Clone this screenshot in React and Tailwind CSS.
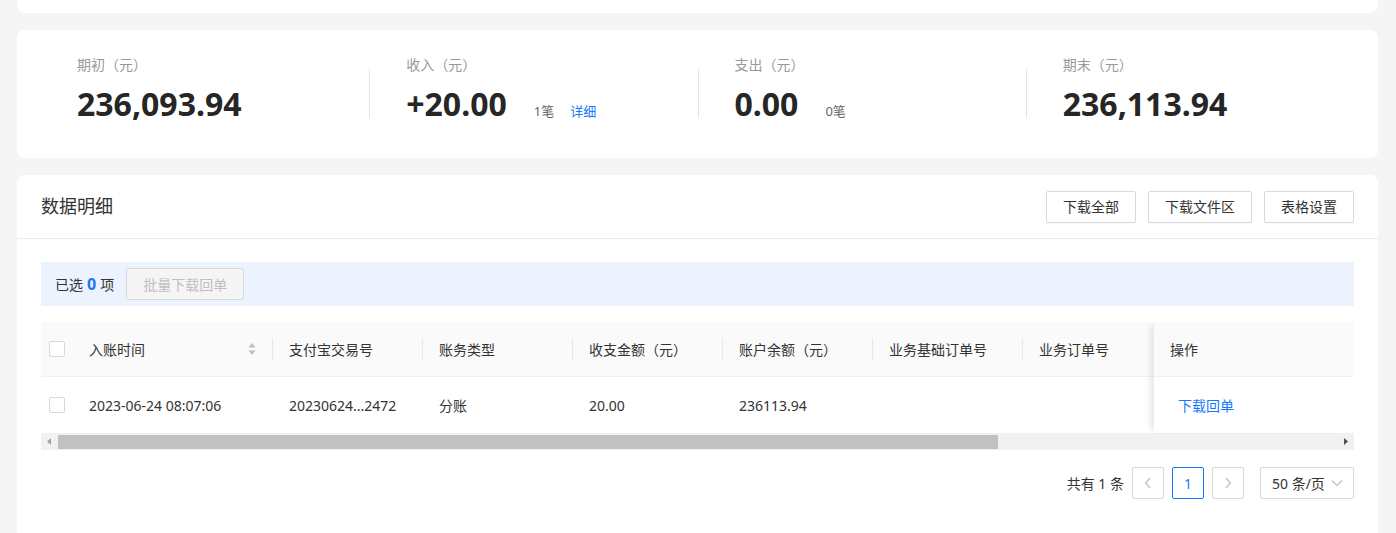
const font = { fontFamily: '"Noto Sans", "Noto Sans CJK SC", sans-serif' };

const stats = [
  { label: "期初（元）", value: "236,093.94" },
  { label: "收入（元）", value: "+20.00", count: "1笔", link: "详细" },
  { label: "支出（元）", value: "0.00", count: "0笔" },
  { label: "期末（元）", value: "236,113.94" },
];

const columns = [
  { title: "入账时间", w: "w-[200px]", sort: true },
  { title: "支付宝交易号", w: "w-[150px]" },
  { title: "账务类型", w: "w-[150px]" },
  { title: "收支金额（元）", w: "w-[150px]" },
  { title: "账户余额（元）", w: "w-[150px]" },
  { title: "业务基础订单号", w: "w-[150px]" },
  { title: "业务订单号", w: "w-[150px]" },
];

const row = ["2023-06-24 08:07:06", "20230624...2472", "分账", "20.00", "236113.94", "", ""];

const Checkbox = () => (
  <span className="block w-4 h-4 rounded-[2px] border border-[#d9d9d9] bg-white" />
);

const SortIcon = () => (
  <svg width="8" height="14" viewBox="0 0 8 14" className="shrink-0">
    <path d="M4 1 L7.5 5.5 H0.5 Z" fill="#bfbfbf" />
    <path d="M4 13 L7.5 8.5 H0.5 Z" fill="#bfbfbf" />
  </svg>
);

const StatCard = () => (
  <div className="bg-white rounded-lg h-[128px] px-6 pt-6 flex">
    {stats.map((s, i) => (
      <div key={s.label} className="flex flex-1">
        {i > 0 && <div className="w-px h-[49px] bg-[#e5e5e5] mt-[15px] shrink-0" />}
        <div className="pl-9">
          <div className="text-[14px] leading-[22px] text-[#999]">{s.label}</div>
          <div className="flex items-baseline mt-2">
            <span className="text-[32px] leading-[40px] font-bold text-[#262626]">{s.value}</span>
            {s.count && <span className="ml-[27px] text-[13px] text-[#666]">{s.count}</span>}
            {s.link && <span className="ml-4 text-[13px] text-[#1677ff]">{s.link}</span>}
          </div>
        </div>
      </div>
    ))}
  </div>
);

const Btn = ({ children }) => (
  <button className="h-8 px-4 border border-[#d9d9d9] rounded-[2px] bg-white text-[14px] text-[#333] shadow-[0_1px_1px_rgba(0,0,0,0.03)]">
    {children}
  </button>
);

const Table = () => (
  <div>
    <div className="flex relative">
      <div className="w-[1112px] overflow-hidden">
        <div className="flex h-[55px] bg-[#fafafa] border-b border-[#f0f0f0] items-center w-max">
          <div className="w-8 pl-2 shrink-0"><Checkbox /></div>
          {columns.map((c) => (
            <div key={c.title} className={`${c.w} shrink-0 flex items-center h-full relative`}>
              <div className="flex-1 flex items-center justify-between pl-4 pr-4 text-[14px] text-[#333]">
                <span>{c.title}</span>
                {c.sort && <SortIcon />}
              </div>
              <div className="w-px h-[22px] bg-[#e8e8e8] shrink-0" />
            </div>
          ))}
        </div>
        <div className="flex h-[56px] items-center w-max bg-white">
          <div className="w-8 pl-2 shrink-0"><Checkbox /></div>
          {columns.map((c, i) => (
            <div key={c.title} className={`${c.w} shrink-0 pl-4 text-[14px] text-[#333]`}>
              {row[i]}
            </div>
          ))}
        </div>
      </div>
      <div className="w-[200px] shrink-0 relative z-10 shadow-[-6px_0_6px_-4px_rgba(0,0,0,0.12)] border-l border-[#f0f0f0]">
        <div className="h-[55px] bg-[#fafafa] border-b border-[#f0f0f0] flex items-center pl-4 text-[14px] text-[#333]">
          操作
        </div>
        <div className="h-[56px] bg-white flex items-center pl-6 text-[14px] text-[#1677ff]">
          下载回单
        </div>
      </div>
    </div>
    <div className="h-[17px] bg-[#f1f1f1] flex items-center">
      <div className="w-[17px] h-full flex items-center justify-center shrink-0">
        <svg width="5" height="7" viewBox="0 0 5 7"><path d="M4 0 V7 L0 3.5 Z" fill="#a3a3a3" /></svg>
      </div>
      <div className="w-[940px] h-[14px] bg-[#c1c1c1] shrink-0" />
      <div className="flex-1" />
      <div className="w-[17px] h-full flex items-center justify-center shrink-0">
        <svg width="5" height="7" viewBox="0 0 5 7"><path d="M1 0 V7 L5 3.5 Z" fill="#505050" /></svg>
      </div>
    </div>
  </div>
);

const Pager = () => (
  <div className="flex items-center justify-end mt-[17px] text-[14px] text-[#333]">
    <span className="mr-2">共有 1 条</span>
    <div className="w-8 h-8 border border-[#d9d9d9] rounded-[2px] flex items-center justify-center">
      <svg width="8" height="12" viewBox="0 0 8 12"><path d="M6 1 L1.5 6 L6 11" stroke="#bfbfbf" strokeWidth="1.2" fill="none" /></svg>
    </div>
    <div className="w-8 h-8 ml-2 border border-[#1677ff] rounded-[2px] flex items-center justify-center text-[#1677ff]">1</div>
    <div className="w-8 h-8 ml-2 border border-[#d9d9d9] rounded-[2px] flex items-center justify-center">
      <svg width="8" height="12" viewBox="0 0 8 12"><path d="M2 1 L6.5 6 L2 11" stroke="#bfbfbf" strokeWidth="1.2" fill="none" /></svg>
    </div>
    <div className="w-[94px] h-8 ml-4 border border-[#d9d9d9] rounded-[2px] flex items-center justify-between pl-[11px] pr-[10px]">
      <span>50 条/页</span>
      <svg width="12" height="8" viewBox="0 0 12 8"><path d="M1 1.5 L6 6.5 L11 1.5" stroke="#bfbfbf" strokeWidth="1.1" fill="none" /></svg>
    </div>
  </div>
);

export default function App() {
  return (
    <div className="bg-[#f5f5f5] min-h-[533px] h-[533px] overflow-hidden pl-[17px] pr-[18px]" style={font}>
      <div className="h-[13px] bg-white rounded-b-lg" />
      <div className="mt-[17px]">
        <StatCard />
      </div>
      <div className="mt-[17px] bg-white rounded-t-lg pb-10">
        <div className="h-[64px] border-b border-[#ebebeb] flex items-center justify-between px-6">
          <div className="text-[18px] text-[#333]">数据明细</div>
          <div className="flex gap-3">
            <Btn>下载全部</Btn>
            <Btn>下载文件区</Btn>
            <Btn>表格设置</Btn>
          </div>
        </div>
        <div className="px-6 pt-[23px]">
          <div className="h-[44px] bg-[#ecf3fe] flex items-center px-[14px] text-[14px] text-[#333]">
            <span>已选</span>
            <span className="mx-1 text-[16px] font-bold text-[#1677ff]">0</span>
            <span>项</span>
            <button className="ml-3 h-8 px-4 border border-[#d9d9d9] rounded-[2px] bg-[#f5f5f5] text-[#bfbfbf] text-[14px]">
              批量下载回单
            </button>
          </div>
          <div className="mt-4">
            <Table />
          </div>
          <Pager />
        </div>
      </div>
    </div>
  );
}
